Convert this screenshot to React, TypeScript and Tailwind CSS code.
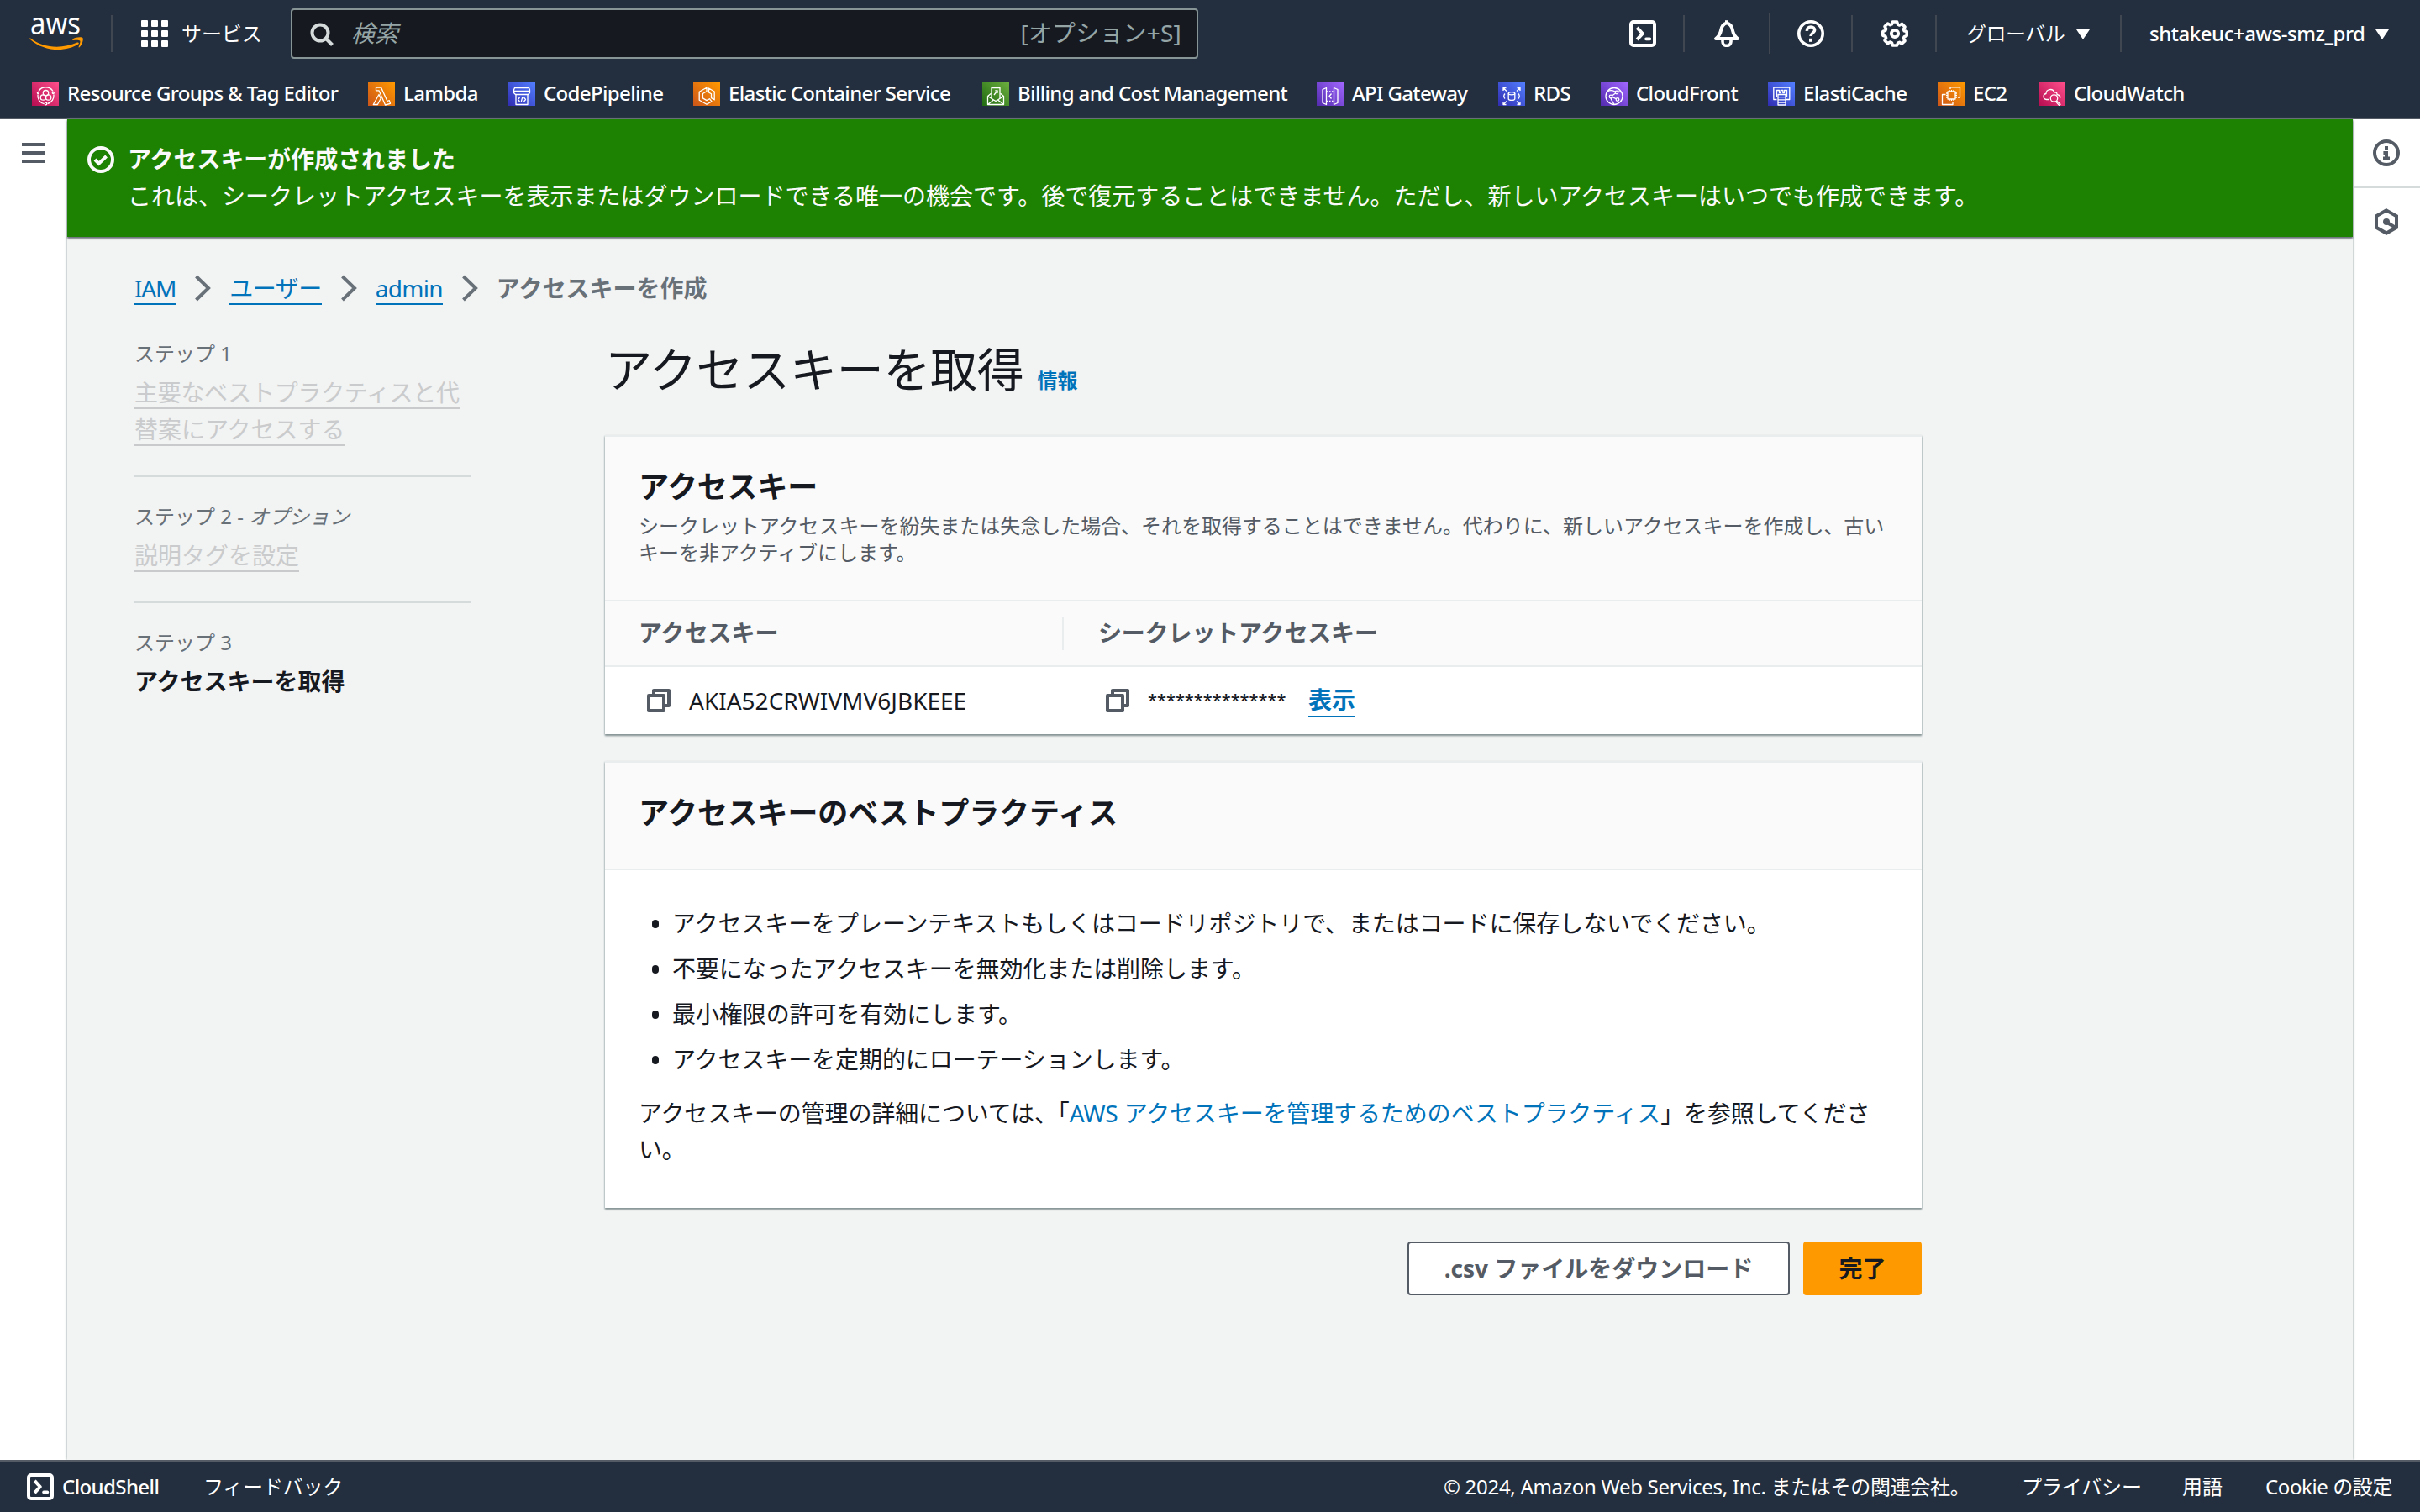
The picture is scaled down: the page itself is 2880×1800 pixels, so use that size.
import React from 'react'
import clsx from 'clsx'

interface IconProps {
  className?: string
}

interface WrapperProps {
  children: React.ReactNode
}

const Stroke = ({ children }: WrapperProps) => (
  <g fill="none" stroke="#fff" strokeWidth="1.3" strokeLinejoin="round">
    {children}
  </g>
)

const favorites = [
  {
    name: 'Resource Groups & Tag Editor',
    from: '#b0084d',
    to: '#ff4f8b',
    width: 'w-[400px]',
    glyph: (
      <>
        <path d="M8 10.500a10 10 0 0 1 17 0M26 14.500a10 10 0 0 1-7.400 11M14.500 25.700A10 10 0 0 1 7 14.500" />
        <circle cx="16.500" cy="12.700" r="3.200" />
        <circle cx="13.400" cy="18" r="3.200" />
        <circle cx="19.600" cy="18" r="3.200" />
        <circle cx="7.400" cy="12.500" r="1" />
        <circle cx="25.300" cy="12.500" r="1" />
        <circle cx="16.500" cy="25.500" r="1.300" />
      </>
    ),
  },
  {
    name: 'Lambda',
    from: '#c8511b',
    to: '#ff9900',
    width: 'w-[167px]',
    glyph: (
      <path d="M9.500 6h6l7.500 16.500 2.300-.8 1.200 3.600-6 1.700L13 9.800H9.500zM13 14.500l2.200 4.700-3.800 7.300H6.300z" />
    ),
  },
  {
    name: 'CodePipeline',
    from: '#2e27ad',
    to: '#527fff',
    width: 'w-[220px]',
    glyph: (
      <>
        <path d="M7.500 6.500h17l1 2.500v3.500l-2 2h-15l-2-2V9zM6.500 10.500h19M9 14.500v12h14v-12" />
        <path d="M13.500 18l-2 2.500 2 2.500M18.500 18l2 2.500-2 2.500M16.800 17.300l-1.600 6.400" />
      </>
    ),
  },
  {
    name: 'Elastic Container Service',
    from: '#c8511b',
    to: '#ff9900',
    width: 'w-[344px]',
    glyph: (
      <>
        <path d="M16 6.300l-8.800 4.900v10L16 26.300l6-3.400-2.600-3.200-3.400 1.900-4.600-2.700v-5.400L16 10.800v-4.500z" />
        <path d="M18.500 7v5l3 1.800v4.800l3.700 2.200V11z" />
      </>
    ),
  },
  {
    name: 'Billing and Cost Management',
    from: '#1b660f',
    to: '#6cae3e',
    width: 'w-[398px]',
    glyph: (
      <>
        <path d="M6.500 16.500l4-3.200M25.500 16.500l-4-3.200M6.500 16.500v10h19v-10L16 22.500zM6.500 26.500l7-5.500M25.500 26.500l-7-5.500" />
        <path d="M11 19V6.500h10V19M14 15l4-5M15.300 9.800h2.800v3" />
      </>
    ),
  },
  {
    name: 'API Gateway',
    from: '#4d27a8',
    to: '#a166ff',
    width: 'w-[216px]',
    glyph: (
      <>
        <path d="M7 8.500l4.500-2v20l-4.500-2zM25 8.500l-4.500-2v20l4.500-2z" />
        <path d="M17.500 13.500L15 16.500l2.500 3" />
        <path d="M12 11h8.500M12 22.500h8.500" strokeDasharray="1.500 1.500" />
      </>
    ),
  },
  {
    name: 'RDS',
    from: '#2e27ad',
    to: '#527fff',
    width: 'w-[122px]',
    glyph: (
      <>
        <ellipse cx="16" cy="13.300" rx="3.800" ry="1.600" />
        <path d="M12.200 13.300v6.500c0 2.200 7.600 2.200 7.600 0v-6.500" />
        <path d="M6 10V6.500h3.500M6 6.500l4 4M26 10V6.500h-3.500M26 6.500l-4 4M6 23v3.500h3.500M6 26.500l4-4M26 23v3.500h-3.500M26 26.500l-4-4" />
        <path d="M8 13.500q-2.500 3 0 6M24 13.500q2.500 3 0 6" />
      </>
    ),
  },
  {
    name: 'CloudFront',
    from: '#4d27a8',
    to: '#a166ff',
    width: 'w-[199px]',
    glyph: (
      <>
        <circle cx="16" cy="16.500" r="10" />
        <circle cx="19" cy="12" r="1.800" />
        <circle cx="12" cy="17" r="1.800" />
        <circle cx="20" cy="20.500" r="1.800" />
        <path d="M13.500 16l4-3M13.800 17.700l4.500 2M8 11c3-2 6-1.500 9 0M12 19c1 3 2 4 4 7M20.500 11c2 0 3.500 0 4.500 1" />
      </>
    ),
  },
  {
    name: 'ElastiCache',
    from: '#2e27ad',
    to: '#527fff',
    width: 'w-[202px]',
    glyph: (
      <>
        <path d="M10.500 20.500H6.800V6h19v14.500H22" />
        <path d="M10.500 17V9.500h3v3h1.700v-3h2.600v3h1.700v-3h3V17" />
        <path d="M12 14.500h9V27h-9zM12 17.700h9M12 20.800h9M12 24h9" />
      </>
    ),
  },
  {
    name: 'EC2',
    from: '#c8511b',
    to: '#ff9900',
    width: 'w-[120px]',
    glyph: (
      <>
        <path d="M12 11h9v9h-9zM14 11V9M16.500 11V9M19 11V9M14 22v-2M16.500 22v-2M19 22v-2M12 13h-2M12 15.500h-2M12 18h-2M23 13h-2M23 15.500h-2M23 18h-2" />
        <path d="M15 8V5.800h11.500V18H24M9.500 14.500H5.500V26.500H18V23.500" />
      </>
    ),
  },
  {
    name: 'CloudWatch',
    from: '#b0084d',
    to: '#ff4f8b',
    width: 'w-[180px]',
    glyph: (
      <>
        <path d="M13 20.500H9.500c-4.500-.5-4.500-6.500-.5-7 0-5.500 8-7 10-1.500 3-.5 3 1.500 3 2.500 2.500.5 4 2 4 4" />
        <circle cx="18.500" cy="19" r="4.200" />
        <path d="M21.500 22l4.500 4.200-1.500 1.200-4-4.500" />
      </>
    ),
  },
]

const AwsLogo = () => (
  <svg className="h-[44px] w-[66px] overflow-visible" viewBox="0 0 66 44">
    <text
      x="1"
      y="20.700"
      fill="#fff"
      fontFamily="Noto Sans"
      fontSize="36"
      textLength="60"
      lengthAdjust="spacingAndGlyphs"
    >
      aws
    </text>
    <path
      d="M.9 25.200C17 37.500 38 38.500 57 30.600c1.500-.6 2.600.9 1.200 2C43 42.500 17 41.500.7 26.700c-.5-.6-.4-1.800.2-1.500z"
      fill="#f90"
    />
    <path
      d="M51.500 26.500c3-2.300 11-2.800 12-1.300s-.5 8-4 11c-.6.5-1.200.2-.9-.5 1-2.500 2.400-6 1.600-7.200s-5.200-.9-8-.6c-1 .1-1.400-.8-.7-1.400z"
      fill="#f90"
    />
  </svg>
)

const TerminalIcon = ({ className }: IconProps) => (
  <svg className={clsx('h-8 w-8', className)} viewBox="0 0 16 16" fill="none" stroke="currentColor" strokeWidth="2" strokeLinejoin="round">
    <rect x="1" y="1" width="14" height="14" rx="1.500" />
    <path d="M4.600 4.400L7.900 8l-3.300 3.600" />
    <path d="M10 11.200h2.200" strokeLinecap="round" strokeWidth="1.800" />
  </svg>
)

const BellIcon = () => (
  <svg className="h-8 w-8" viewBox="0 0 16 16" fill="none" stroke="currentColor" strokeWidth="2" strokeLinejoin="round">
    <path d="M8 1.700C5.900 2.200 5 3.800 4.600 5.800 4.100 8.200 3.300 9.700 1.500 11h13c-1.800-1.300-2.600-2.800-3.100-5.200C11 3.800 10.100 2.200 8 1.700z" />
    <path d="M7 1h2" strokeWidth="1.800" />
    <path d="M5.500 11.500v1.200a2.500 2.500 0 0 0 5 0v-1.200" strokeWidth="1.800" />
  </svg>
)

const HelpIcon = () => (
  <svg className="h-8 w-8" viewBox="0 0 16 16" fill="none" stroke="currentColor" strokeWidth="1.800">
    <circle cx="8" cy="8" r="7.100" />
    <path d="M5.700 6.400C5.600 4.800 6.700 4 8 4c1.400 0 2.300.8 2.300 2 0 1.500-2.300 1.700-2.300 3.500" />
    <path d="M8 10.900v2" strokeWidth="2" />
  </svg>
)

const GearIcon = () => (
  <svg className="h-8 w-8" viewBox="0 0 16 16" fill="none" stroke="currentColor" strokeWidth="1.800" strokeLinejoin="round">
    <path d="M6.700 1h2.600l.5 1.600 1 .4 1.500-.8 1.700 1.800-.8 1.400.4 1 1.500.4v2.500l-1.500.5-.4 1 .8 1.500-1.800 1.700-1.400-.8-1 .4L9.300 15H6.700l-.5-1.600-1-.4-1.400.8L2 12.100l.8-1.500-.4-1L.9 9.100V6.700l1.500-.5.4-1L2 3.800 3.800 2l1.400.8 1-.4z" />
    <circle cx="8" cy="8" r="2.100" strokeWidth="1.900" />
  </svg>
)

const Caret = () => (
  <svg className="mt-px h-3 w-4" viewBox="0 0 16 12" fill="currentColor">
    <path d="M0 0h16L8 12z" />
  </svg>
)

const Divider = () => <div className="h-11 w-0.5 bg-[#414750]" />

const Chevron = () => (
  <svg className="h-8 w-5" viewBox="0 0 20 32" fill="none" stroke="#687078" strokeWidth="4">
    <path d="M2.500 2L17 16 2.500 30" />
  </svg>
)

const CopyIcon = () => (
  <svg className="h-7 w-7" viewBox="0 0 28 28" fill="none" stroke="#545b64" strokeWidth="4" strokeLinejoin="round">
    <path d="M2 8h18v18H2z" />
    <path d="M8 8V2h18v18h-6" />
  </svg>
)

const TopNav = () => (
  <div className="flex h-20 items-center text-2xl">
    <div className="ml-[35px] mt-1">
      <AwsLogo />
    </div>
    <div className="ml-[31px]">
      <Divider />
    </div>
    <div className="ml-[34px] grid grid-cols-3 gap-1">
      {Array.from({ length: 9 }, (_, i) => (
        <div key={i} className="h-2 w-2 rounded-[1px] bg-white" />
      ))}
    </div>
    <span className="ml-4 w-[130px] tracking-[-0.1px]">サービス</span>
    <div className="flex h-[60px] w-[1080px] items-center rounded border-2 border-[#879596] bg-[#16191f] text-[28px] text-[#95a5a6]">
      <svg className="ml-[21px] mt-px h-7 w-7" viewBox="0 0 28 28" fill="none" stroke="#d5dbdb" strokeWidth="4">
        <circle cx="12" cy="12" r="9.500" />
        <path d="M18.500 18.500l8 8" />
      </svg>
      <span className="ml-[21px] italic">検索</span>
      <span className="ml-auto mr-[18px] tracking-[0.2px]">[オプション+S]</span>
    </div>
    <TerminalIcon className="ml-[513px]" />
    <div className="ml-8 flex items-center">
      <Divider />
      <div className="ml-[34px] mr-[34px]"><BellIcon /></div>
      <div className="h-12 w-0.5 bg-[#414750]" />
      <div className="mx-8"><HelpIcon /></div>
      <Divider />
      <div className="ml-[34px] mr-8"><GearIcon /></div>
      <Divider />
    </div>
    <span className="ml-[35px] w-[131px] tracking-[-0.5px]">グローバル</span>
    <Caret />
    <div className="ml-[36px]">
      <Divider />
    </div>
    <span className="ml-[33px] w-[269px] whitespace-nowrap font-medium tracking-[-0.45px]">shtakeuc+aws-smz_prd</span>
    <Caret />
  </div>
)

const FavoritesBar = () => (
  <div className="flex h-[60px] pl-[38px] pt-[18px]">
    {favorites.map((fav, i) => (
      <div key={fav.name} className={clsx('flex shrink-0', fav.width)}>
        {/* the tile is cropped 4px at the bottom */}
        <div className="h-7 w-8 shrink-0 overflow-hidden">
          <svg className="h-8 w-8" viewBox="0 0 32 32">
            <defs>
              <linearGradient id={`fav-${i}`} x1="0" y1="1" x2="1" y2="0">
                <stop offset="0" stopColor={fav.from} />
                <stop offset="1" stopColor={fav.to} />
              </linearGradient>
            </defs>
            <rect width="32" height="32" fill={`url(#fav-${i})`} />
            <Stroke>{fav.glyph}</Stroke>
          </svg>
        </div>
        <span className="ml-2.5 whitespace-nowrap text-2xl font-medium leading-[25px] tracking-[-0.65px]">{fav.name}</span>
      </div>
    ))}
  </div>
)

const Banner = () => (
  <div className="relative flex h-[140px] bg-[#1d8102] pl-6 text-[28px] leading-[44px] text-[#fafafa] shadow-[0_2px_2px_0_#687078]">
    <svg className="mt-8 h-8 w-8" viewBox="0 0 16 16" fill="none" stroke="currentColor" strokeWidth="2">
      <circle cx="8" cy="8" r="7" />
      <path d="M4.500 8l2.300 2.300L11.300 6" />
    </svg>
    <div className="ml-4 mt-[25px]">
      <div className="font-bold tracking-[-0.05px]">アクセスキーが作成されました</div>
      <div className="whitespace-nowrap">
        これは、シークレットアクセスキーを表示またはダウンロードできる唯一の機会です。後で復元することはできません。ただし、新しいアクセスキーはいつでも作成できます。
      </div>
    </div>
  </div>
)

const Breadcrumbs = () => (
  <nav className="flex h-9 items-start text-[28px] leading-[33px] text-[#0073bb]">
    <a className="h-9 border-b-2 border-[#0073bb] tracking-[-1.2px]">IAM</a>
    <div className="mx-[22px]"><Chevron /></div>
    <a className="h-9 border-b-2 border-[#0073bb] tracking-[-0.5px]">ユーザー</a>
    <div className="mx-[22px]"><Chevron /></div>
    <a className="h-9 border-b-2 border-[#0073bb] tracking-[-0.7px]">admin</a>
    <div className="mx-[22px]"><Chevron /></div>
    <span className="font-bold text-[#687078]">アクセスキーを作成</span>
  </nav>
)

interface StepProps {
  label: React.ReactNode
  lines: string[]
  active?: boolean
}

const Step = ({ label, lines, active }: StepProps) => (
  <div className={clsx('w-[400px]', !active && 'mb-[31px] border-b-2 border-[#d5dbdb] pb-[33px]')}>
    <div className="text-2xl leading-8 text-[#687078]">{label}</div>
    <div className={clsx('mt-2 text-[28px]', active ? 'font-bold text-[#16191f]' : 'text-[#cacbcc]')}>
      {lines.map((line) => (
        <div key={line} className="h-11">
          <span
            className={clsx(
              'inline-block h-[42px] leading-[44px]',
              line.length > 12 && 'tracking-[-0.3px]',
              !active && 'border-b-2 border-[#c9cacb]'
            )}
          >
            {line}
          </span>
        </div>
      ))}
    </div>
  </div>
)

const Card = ({ children }: WrapperProps) => (
  <section className="border-t-2 border-[#eaeded] bg-white shadow-[0_2px_2px_0_#879596,0_1px_2px_0_#aab7b8]">{children}</section>
)

const KeyCard = () => (
  <Card>
    <div className="h-[196px] border-b-2 border-[#eaeded] bg-[#fafafa] px-10 pt-[38px]">
      <h2 className="text-[36px] font-bold leading-[44px] tracking-[-0.2px]">アクセスキー</h2>
      <p className="mt-2 whitespace-nowrap text-2xl leading-8 tracking-[-0.03px] text-[#545b64]">
        シークレットアクセスキーを紛失または失念した場合、それを取得することはできません。代わりに、新しいアクセスキーを作成し、古い
        <br />
        キーを非アクティブにします。
      </p>
    </div>
    <div className="flex h-[78px] items-center border-b-2 border-[#eaeded] bg-[#fafafa] pl-10 text-[28px] font-bold leading-10 text-[#545b64]">
      <div className="w-[504px] pb-0.5">アクセスキー</div>
      <div className="h-10 w-0.5 bg-[#eaeded]" />
      <div className="ml-[41px] pb-0.5 tracking-[-0.15px]">シークレットアクセスキー</div>
    </div>
    <div className="flex h-20 items-center pl-[50px] text-[28px] leading-9">
      <CopyIcon />
      <span className="ml-[22px] w-[496px]">AKIA52CRWIVMV6JBKEEE</span>
      <CopyIcon />
      <span className="ml-[22px] w-[191px] text-xl font-medium">***************</span>
      <a className="mt-0.5 h-[37px] border-b-2 border-[#0073bb] font-bold leading-[32px] text-[#0073bb]">表示</a>
    </div>
  </Card>
)

const practices = [
  'アクセスキーをプレーンテキストもしくはコードリポジトリで、またはコードに保存しないでください。',
  '不要になったアクセスキーを無効化または削除します。',
  '最小権限の許可を有効にします。',
  'アクセスキーを定期的にローテーションします。',
]

const PracticesCard = () => (
  <Card>
    <div className="h-32 border-b-2 border-[#eaeded] bg-[#fafafa] px-10 pt-[38px]">
      <h2 className="text-[36px] font-bold leading-[44px] tracking-[-0.15px]">アクセスキーのベストプラクティス</h2>
    </div>
    <div className="h-[402px] px-10 pt-9 text-[28px] leading-[43px]">
      <ul>
        {practices.map((text) => (
          <li key={text} className="flex h-[54px] items-center pl-4">
            <span className="mt-0.5 h-2.5 w-2 rounded-full bg-[#16191f]" />
            <span className="ml-4 whitespace-nowrap tracking-[-0.08px]">{text}</span>
          </li>
        ))}
      </ul>
      <p className="mt-4 whitespace-nowrap tracking-[-0.13px]">
        アクセスキーの管理の詳細については、「<a className="text-[#0073bb]">AWS アクセスキーを管理するためのベストプラクティス</a>」を参照してくださ
        <br />
        い。
      </p>
    </div>
  </Card>
)

const Footer = () => (
  <footer className="flex h-[62px] items-center border-t-2 border-[#545b64] bg-[#232f3e] text-2xl text-white">
    <TerminalIcon className="ml-8" />
    <span className="ml-2.5 w-[168px] font-medium tracking-[-0.6px]">CloudShell</span>
    <span className="tracking-[-0.2px]">フィードバック</span>
    <div className="ml-auto mr-8 flex whitespace-nowrap">
      <span className="w-[688px] tracking-[-0.3px]">© 2024, Amazon Web Services, Inc. またはその関連会社。</span>
      <span className="w-[191px] tracking-[-0.1px]">プライバシー</span>
      <span className="w-[99px]">用語</span>
      <span className="w-[152px] tracking-[-0.4px]">Cookie の設定</span>
    </div>
  </footer>
)

export default function App() {
  return (
    <div className="flex h-[1800px] w-[2880px] flex-col overflow-hidden bg-white font-['Noto_Sans','Noto_Sans_CJK_JP',sans-serif] text-[#16191f]">
      <header className="h-[142px] border-b-2 border-[#545b64] bg-[#232f3e] text-white">
        <TopNav />
        <FavoritesBar />
      </header>

      <div className="flex flex-1">
        <aside className="flex w-20 flex-col gap-1.5 pl-[26px] pt-7">
          <div className="h-1 w-7 bg-[#545b64]" />
          <div className="h-1 w-7 bg-[#545b64]" />
          <div className="h-1 w-7 bg-[#545b64]" />
        </aside>

        <main className="w-[2720px] bg-[#f2f3f3] shadow-[0_0_3px_0_#879596]">
          <Banner />
          <div className="pl-20 pt-[45px]">
            <Breadcrumbs />
            <div className="flex pt-[42px]">
              <div className="w-[560px]">
                <Step label="ステップ 1" lines={['主要なベストプラクティスと代', '替案にアクセスする']} />
                <Step
                  label={<>ステップ 2 - <i>オプション</i></>}
                  lines={['説明タグを設定']}
                />
                <Step label="ステップ 3" lines={['アクセスキーを取得']} active />
              </div>

              <div className="w-[1567px]">
                <div className="flex h-[113px] items-start">
                  <h1 className="text-[56px] leading-[69px] tracking-[-0.3px]">アクセスキーを取得</h1>
                  <a className="ml-4 mt-8 text-2xl font-bold leading-8 text-[#0073bb]">情報</a>
                </div>
                <KeyCard />
                <div className="h-8" />
                <PracticesCard />
                <div className="mt-10 flex h-16 justify-end gap-4 text-[28px] font-bold">
                  <button className="w-[455px] rounded border-2 border-[#545b64] bg-white text-[#545b64]">.csv ファイルをダウンロード</button>
                  <button className="w-[141px] rounded bg-[#ff9900] text-[#16191f]">完了</button>
                </div>
              </div>
            </div>
          </div>
        </main>

        <aside className="flex w-20 flex-col text-[#545b64]">
          <div className="flex h-[82px] justify-end border-b-2 border-[#d5dbdb] pr-6 pt-6">
            <svg className="h-8 w-8" viewBox="0 0 16 16" fill="none" stroke="currentColor" strokeWidth="2">
              <circle cx="8" cy="8" r="7" />
              <path d="M8 4v2M6.200 8H8v3.500M6 11.200h4" />
            </svg>
          </div>
          <svg className="ml-6 mt-6 h-8 w-8" viewBox="0 0 16 16" fill="none" stroke="currentColor" strokeWidth="2">
            <path d="M8 1.200l6 3.400v6.800l-6 3.400-6-3.400V4.600z" />
            <circle cx="8" cy="8" r="2" fill="currentColor" stroke="none" />
            <path d="M8.500 8.500l5 3" />
          </svg>
        </aside>
      </div>

      <Footer />
    </div>
  )
}
